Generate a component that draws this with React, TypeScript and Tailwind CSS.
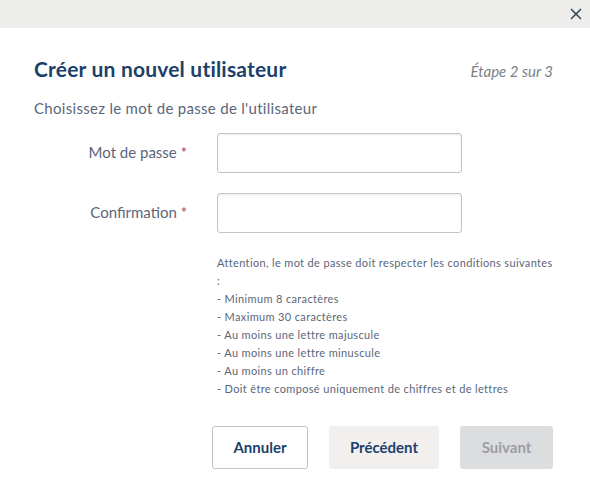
import { X } from "lucide-react";

const rules = [
  "- Minimum 8 caractères",
  "- Maximum 30 caractères",
  "- Au moins une lettre majuscule",
  "- Au moins une lettre minuscule",
  "- Au moins un chiffre",
  "- Doit être composé uniquement de chiffres et de lettres",
];

function Field({ label }: { label: string }) {
  return (
    <div className="flex items-center">
      <label className="-mt-[2px] w-[153px] text-right text-[15px] text-[#5b6679]">
        {label} <span className="text-[#c0392b]">*</span>
      </label>
      <input
        type="password"
        className="ml-[30px] h-[40px] w-[245px] rounded-[3px] border border-[#c4c4c4] bg-white shadow-[inset_0_1px_2px_rgba(0,0,0,0.08)] outline-none"
      />
    </div>
  );
}

export default function App() {
  return (
    <div className="h-[494px] w-[590px] bg-white font-['Lato',sans-serif]">
      <div className="flex h-[28px] items-center justify-end bg-[#edeeec] pr-[5px]">
        <X size={18} strokeWidth={2.2} className="text-[#3d4a5c]" />
      </div>
      <div className="pl-[34px] pr-[37px]">
        <div className="mt-[25px] flex items-baseline justify-between">
          <h1 className="text-[21px] font-bold tracking-[0.2px] text-[#1d3f6b]">Créer un nouvel utilisateur</h1>
          <span className="text-[15px] italic text-[#7a7f87]">Étape 2 sur 3</span>
        </div>
        <p className="mt-[12px] text-[15px] tracking-[0.3px] text-[#5b6679]">Choisissez le mot de passe de l'utilisateur</p>
        <div className="mt-[14px] flex flex-col gap-[20px]">
          <Field label="Mot de passe" />
          <Field label="Confirmation" />
        </div>
        <div className="ml-[183px] mt-[21px] text-[11px] leading-[18px] tracking-[0.35px] text-[#5b6679]">
          <p>Attention, le mot de passe doit respecter les conditions suivantes</p>
          <p>:</p>
          {rules.map((r) => (
            <p key={r}>{r}</p>
          ))}
        </div>
        <div className="mt-[28px] flex justify-end gap-[21px]">
          <button className="h-[43px] w-[96px] rounded-[3px] border border-[#c4c4c4] bg-white text-[15px] font-bold text-[#1d3f6b]">
            Annuler
          </button>
          <button className="h-[43px] w-[110px] rounded-[3px] bg-[#f1f0ef] text-[15px] font-bold text-[#1d3f6b]">
            Précédent
          </button>
          <button className="h-[43px] w-[93px] rounded-[3px] bg-[#dcdddf] text-[15px] font-bold text-[#9b9ea3]">
            Suivant
          </button>
        </div>
      </div>
    </div>
  );
}
